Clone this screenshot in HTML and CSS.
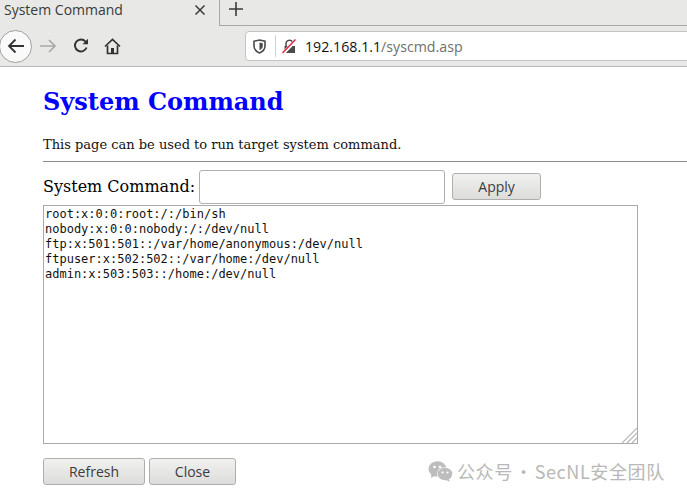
FILE: index.html
```html
<!DOCTYPE html>
<html lang="en">
<head>
<meta charset="utf-8">
<title>System Command</title>
<link rel="stylesheet" href="styles.css">
</head>
<body>
<header class="chrome">
  <div class="tabstrip">
    <div class="tab">
      <span class="tab-title">System Command</span>
      <svg class="tab-close" width="12" height="12" viewBox="0 0 12 12"><path d="M1.500 1.500l9 9M10.500 1.500l-9 9" stroke="#3c3c3c" stroke-width="1.500" fill="none"/></svg>
    </div>
    <div class="newtab">
      <svg width="16" height="16" viewBox="0 0 16 16"><path d="M8 1v14M1 8h14" stroke="#3a3a3a" stroke-width="1.600" fill="none"/></svg>
    </div>
  </div>
  <nav class="toolbar">
    <div class="back">
      <svg width="18" height="16" viewBox="0 0 18 16"><path d="M17 8H2M8.500 1.500L2 8l6.500 6.500" stroke="#333" stroke-width="1.800" fill="none"/></svg>
    </div>
    <svg class="forward" width="17" height="16" viewBox="0 0 17 16"><path d="M0 8h15M9 2l6 6-6 6" stroke="#a9a9a9" stroke-width="1.700" fill="none"/></svg>
    <svg class="reload" width="16" height="16" viewBox="0 0 16 16"><path d="M13.600 9.500A6 6 0 1 1 12.500 3.500L14 5" stroke="#333" stroke-width="1.900" fill="none"/><path d="M15 .8V6.300H9.500z" fill="#333"/></svg>
    <svg class="home" width="17" height="17" viewBox="0 0 17 17"><path d="M1 8.500L8.500 1.500 16 8.500" stroke="#333" stroke-width="1.700" fill="none"/><path d="M3.500 7.500V15.500H13.500V7.500" stroke="#333" stroke-width="1.700" fill="none"/><rect x="7" y="10" width="3" height="5.500" fill="#333"/></svg>
    <div class="urlbar">
      <svg class="shield" width="13" height="15" viewBox="0 0 13 15"><path d="M1 2.200L6.500 1 12 2.200V7c0 3.500-2.500 5.700-5.500 7C3.500 12.700 1 10.500 1 7z" stroke="#4a4a4a" stroke-width="1.600" fill="none"/><path d="M6.500 3.500L9.800 4.200V7c0 2-1.500 3.400-3.300 4.300z" fill="#4a4a4a"/></svg>
      <span class="url-sep"></span>
      <svg class="lock" width="15" height="15" viewBox="0 0 15 15"><path d="M4 7V4.500a3.500 3.500 0 0 1 6.500-1.500" stroke="#4a4a4a" stroke-width="1.500" fill="none"/><path d="M2.500 7H13v7H2.500z" fill="#4a4a4a"/><path d="M1 14.500L14 1" stroke="#fff" stroke-width="3.400"/><path d="M.5 14L13.500.5" stroke="#e8233f" stroke-width="1.500"/></svg>
      <span class="url"><span class="host">192.168.1.1</span>/syscmd.asp</span>
    </div>
  </nav>
</header>
<main class="page">
  <h1 class="title">System Command</h1>
  <p class="intro">This page can be used to run target system command.</p>
  <hr class="rule">
  <form class="command-row">
    <label class="command-label" for="cmd">System Command:</label>
    <input class="command-input" id="cmd" type="text">
    <button class="btn btn-apply" type="button">Apply</button>
  </form>
  <div class="output-wrap">
    <textarea class="output" readonly>root:x:0:0:root:/:/bin/sh
nobody:x:0:0:nobody:/:/dev/null
ftp:x:501:501::/var/home/anonymous:/dev/null
ftpuser:x:502:502::/var/home:/dev/null
admin:x:503:503::/home:/dev/null</textarea>
    <svg class="grip" width="15" height="15" viewBox="0 0 15 15"><path d="M0 15L15 0M5 15L15 5M10 15L15 10" stroke="#b4b4b4" stroke-width="1.200" fill="none"/></svg>
  </div>
  <div class="actions">
    <button class="btn btn-refresh" type="button">Refresh</button>
    <button class="btn btn-close" type="button">Close</button>
  </div>
</main>
<div class="watermark">
  <svg width="25" height="21" viewBox="0 0 25 21"><ellipse cx="9.500" cy="8" rx="9" ry="7.700" fill="#bdbdbd"/><path d="M3.500 12.500L3 17l5-3z" fill="#bdbdbd"/><circle cx="6.500" cy="6" r="1.300" fill="#fff"/><circle cx="12" cy="6" r="1.300" fill="#fff"/><ellipse cx="17" cy="13" rx="8" ry="6.700" fill="#fff"/><ellipse cx="17" cy="13" rx="7.300" ry="6.200" fill="#bdbdbd"/><path d="M20.500 17.500L22 20.800l-5-2z" fill="#bdbdbd"/><circle cx="14.500" cy="11.500" r="1.100" fill="#fff"/><circle cx="19.500" cy="11.500" r="1.100" fill="#fff"/></svg>
  <span class="watermark-text">公众号 · SecNL安全团队</span>
</div>
</body>
</html>
```
FILE: styles.css
```css
* { box-sizing: border-box; }
html, body { margin: 0; height: 100%; }
body {
  position: relative;
  width: 687px;
  height: 497px;
  overflow: hidden;
  background: #fff;
  font-family: "DejaVu Serif", serif;
  color: #000;
}
.chrome { background: #e8e8e7; height: 67px; border-bottom: 1px solid #b5b5b3; }
.tabstrip { display: flex; height: 26px; }
.tab {
  width: 220px;
  display: flex;
  align-items: center;
  justify-content: space-between;
  padding: 0 13px 7px 4px;
  border-right: 1px solid #a8a8a6;
}
.tab-title { font: 14px "Open Sans", "Noto Sans", sans-serif; color: #3a3a3a; }
.newtab { flex: 1; padding: 1px 0 0 8px; border-bottom: 1px solid #a8a8a6; }
.toolbar { display: flex; align-items: center; height: 40px; position: relative; }
.toolbar > * { flex: none; }
.back {
  width: 33px;
  height: 33px;
  margin-left: -1px;
  border-radius: 50%;
  background: #fafafa;
  border: 1px solid #9f9f9f;
  display: flex;
  align-items: center;
  justify-content: center;
}
.forward { margin-left: 8px; }
.reload { margin-left: 16px; }
.home { margin-left: 15px; }
.urlbar {
  margin-left: 124px;
  width: 460px;
  height: 30px;
  background: #fff;
  border: 1px solid #c4c4c2;
  border-radius: 4px;
  display: flex;
  align-items: center;
  padding-left: 8px;
}
.shield { margin-left: -1px; }
.url-sep { width: 1px; height: 22px; background: #d0d0ce; margin: 0 6px 0 9px; }
.url { margin-left: 8px; font: 14.200px "Open Sans", "Noto Sans", sans-serif; color: #6f6f6f; }
.host { color: #111; }
.page { padding: 0 0 0 43px; }
.title {
  margin: 18px 0 0;
  font-size: 24px;
  line-height: 34px;
  font-weight: 700;
  color: #00f;
}
.intro { margin: 17px 0 0; font-size: 13px; line-height: 18px; color: #111; }
.rule { margin: 7px 0 0; border: 0; height: 1px; background: #8a8a8a; }
.command-row { display: flex; align-items: center; height: 36px; margin-top: 7px; }
.command-label { font-size: 16px; padding-bottom: 2px; }
.command-input {
  width: 246px;
  height: 34px;
  margin-left: 4px;
  border: 1px solid #b0b0b0;
  border-radius: 3px;
  background: #fff;
}
.btn {
  height: 27px;
  padding: 0;
  border: 1px solid #aeaeae;
  border-radius: 3px;
  background: linear-gradient(#f1f1f0, #dcdcda);
  font: 14px "Open Sans", "Noto Sans", sans-serif;
  color: #3c3c3c;
}
.btn-apply { width: 89px; margin: 0 0 1px 7px; }
.output-wrap { position: relative; width: 595px; height: 239px; }
.output {
  display: block;
  width: 100%;
  height: 100%;
  margin: 0;
  padding: 1px 1px;
  border: 1px solid #aaa;
  border-radius: 0;
  font: 12px/15px "DejaVu Sans Mono", monospace;
  color: #111;
  background: #fff;
  resize: none;
  outline: 0;
}
.grip { position: absolute; right: 1px; bottom: 1px; }
.actions { display: flex; gap: 4px; margin-top: 14px; }
.btn-refresh { width: 102px; }
.btn-close { width: 87px; }
.watermark {
  position: absolute;
  left: 428px;
  top: 458px;
  display: flex;
  align-items: center;
  gap: 4px;
}
.watermark-text {
  font: 18px "Noto Sans CJK SC", sans-serif;
  color: #b8b8b8;
  letter-spacing: 0.600px;
  word-spacing: -3px;
  white-space: nowrap;
}
```
